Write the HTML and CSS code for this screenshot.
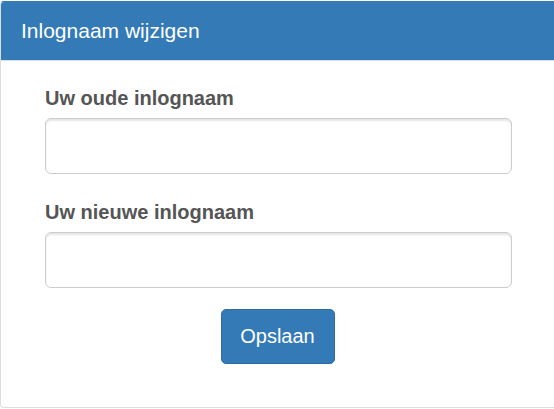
FILE: index.html
```html
<!DOCTYPE html>
<html lang="nl">
<head>
<meta charset="utf-8">
<title>Inlognaam wijzigen</title>
<link rel="stylesheet" href="styles.css">
</head>
<body>
<div class="panel">
  <div class="panel-heading">Inlognaam wijzigen</div>
  <div class="panel-body">
    <form class="form">
      <label class="label" for="old">Uw oude inlognaam</label>
      <input class="input" id="old" type="text">
      <label class="label label-second" for="new">Uw nieuwe inlognaam</label>
      <input class="input" id="new" type="text">
      <div class="actions">
        <button class="btn" type="button">Opslaan</button>
      </div>
    </form>
  </div>
</div>
</body>
</html>
```
FILE: styles.css
```css
html, body {
  margin: 0;
  padding: 0;
  background: #fff;
  overflow: hidden;
}
body {
  font-family: "Liberation Sans", Arial, Helvetica, sans-serif;
  color: #555;
}
.panel {
  margin-top: 1px;
  margin-right: -6px;
  height: 405px;
  border: 1px solid #ddd;
  border-top-color: #337ab7;
  border-radius: 4px;
  overflow: hidden;
}
.panel-heading {
  height: 60px;
  box-sizing: border-box;
  background: #337ab7;
  color: #fff;
  font-size: 21px;
  line-height: 60px;
  padding-left: 21px;
  border-bottom: 1px solid #d6deea;
  margin-left: -1px;
  margin-top: -1px;
}
.panel-body {
  padding: 24px 0 0 44px;
}
.form {
  width: 467px;
  display: flex;
  flex-direction: column;
}
.label {
  display: block;
  font-size: 20px;
  font-weight: bold;
  line-height: 26px;
  margin-bottom: 7px;
  color: #555;
}
.label-second {
  margin-top: 25px;
}
.input {
  box-sizing: border-box;
  width: 467px;
  height: 56px;
  border: 1px solid #ccc;
  border-radius: 6px;
  box-shadow: inset 0 2px 2px rgba(0,0,0,0.1);
  outline: none;
  margin: 0;
}
.actions {
  display: flex;
  justify-content: center;
  margin-top: 21px;
}
.btn {
  width: 114px;
  height: 55px;
  margin-left: -2px;
  background: #337ab7;
  border: 1px solid #2e6da4;
  border-radius: 5px;
  color: #fff;
  font-family: "Liberation Sans", Arial, Helvetica, sans-serif;
  font-size: 20px;
  padding: 0;
}
```
